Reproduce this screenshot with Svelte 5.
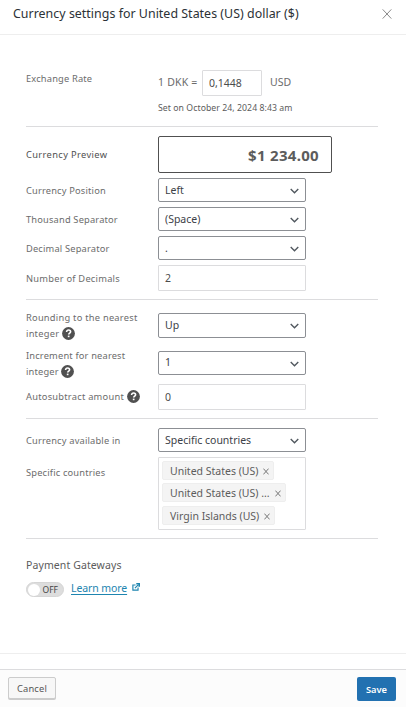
<script>
	let position = $state('Left');
	let thousand = $state('(Space)');
	let decimal = $state('.');
	let rounding = $state('Up');
	let increment = $state('1');
	let availability = $state('Specific countries');
	let enabled = $state(false);

	let countries = $state(['United States (US)', 'United States (US) ...', 'Virgin Islands (US)']);

	function removeCountry(index) {
		countries.splice(index, 1);
	}
</script>

{#snippet chevron()}
	<svg class="chevron" viewBox="0 0 10 6" aria-hidden="true">
		<path d="M.8 .8 5 4.9 9.2 .8" />
	</svg>
{/snippet}

{#snippet help()}
	<svg class="help" viewBox="0 0 13 13" aria-hidden="true">
		<circle cx="6.5" cy="6.5" r="6.4" fill="#505050" />
		<path d="M4.6 5C4.6 3.7 5.4 3 6.6 3s2 .7 2 1.7c0 1.4-1.9 1.4-1.9 2.9" fill="none" stroke="#fff" stroke-width="1.6" />
		<rect x="5.8" y="8.6" width="1.7" height="1.6" fill="#fff" />
	</svg>
{/snippet}

<div class="dialog">
	<header>
		<h1>Currency settings for United States (US) dollar ($)</h1>
		<button class="close" aria-label="Close">
			<svg viewBox="0 0 10 10"><path d="M.7.4 9.3 9.6M9.3.4.7 9.6" /></svg>
		</button>
	</header>

	<main>
		<section class="exchange">
			<div class="row">
				<span class="label">Exchange Rate</span>
				<div>
					<div class="rate">
						<span class="base">1 DKK =</span>
						<input class="rate-input" value="0,1448" aria-label="Exchange rate" />
						<span class="code">USD</span>
					</div>
					<p class="updated">Set on October 24, 2024 8:43 am</p>
				</div>
			</div>
		</section>

		<section class="format">
			<div class="row">
				<span class="label strong">Currency Preview</span>
				<div class="preview"><span>$1 234.00</span></div>
			</div>
			<div class="row">
				<label class="label" for="position">Currency Position</label>
				<div class="select">
					<select id="position" bind:value={position}>
						<option>Left</option>
						<option>Right</option>
					</select>
					{@render chevron()}
				</div>
			</div>
			<div class="row">
				<label class="label" for="thousand">Thousand Separator</label>
				<div class="select">
					<select id="thousand" bind:value={thousand}>
						<option>(Space)</option>
						<option>.</option>
					</select>
					{@render chevron()}
				</div>
			</div>
			<div class="row">
				<label class="label" for="decimal">Decimal Separator</label>
				<div class="select">
					<select id="decimal" bind:value={decimal}>
						<option>.</option>
						<option>,</option>
					</select>
					{@render chevron()}
				</div>
			</div>
			<div class="row">
				<label class="label spaced" for="decimals">Number of Decimals</label>
				<input id="decimals" value="2" />
			</div>
		</section>

		<section class="rounding">
			<div class="row two-line">
				<label class="label spaced" for="rounding">Rounding to the nearest<br />integer {@render help()}</label>
				<div class="select tall">
					<select id="rounding" bind:value={rounding}>
						<option>Up</option>
						<option>Down</option>
					</select>
					{@render chevron()}
				</div>
			</div>
			<div class="row two-line">
				<label class="label" for="increment">Increment for nearest<br />integer {@render help()}</label>
				<div class="select raised">
					<select id="increment" bind:value={increment}>
						<option>1</option>
						<option>10</option>
					</select>
					{@render chevron()}
				</div>
			</div>
			<div class="row">
				<label class="label spaced" for="autosubtract">Autosubtract amount {@render help()}</label>
				<input id="autosubtract" value="0" />
			</div>
		</section>

		<section class="availability">
			<div class="row">
				<label class="label" for="availability">Currency available in</label>
				<div class="select">
					<select id="availability" bind:value={availability}>
						<option>Specific countries</option>
						<option>All countries</option>
					</select>
					{@render chevron()}
				</div>
			</div>
			<div class="row top">
				<span class="label">Specific countries</span>
				<ul class="tags">
					{#each countries as country, i}
						<li>
							<span>{country}</span>
							<button aria-label="Remove {country}" onclick={() => removeCountry(i)}>
								<svg viewBox="0 0 6 7"><path d="M.4.6 5.6 6.4M5.6.6.4 6.4" /></svg>
							</button>
						</li>
					{/each}
				</ul>
			</div>
		</section>

		<section class="gateways">
			<h2>Payment Gateways</h2>
			<div class="gateway">
				<button class="toggle" class:on={enabled} onclick={() => (enabled = !enabled)}>
					<i></i><span>{enabled ? 'ON' : 'OFF'}</span>
				</button>
				<a href="#learn">Learn more</a>
				<svg class="external" viewBox="0 0 9 9" aria-hidden="true">
					<path d="M4 2.2H1v5.9h5.8V5M3.3 5.7 7.2 1.8" />
					<path d="M4.8.9h3.3v3.3" stroke-width="1.8" />
				</svg>
			</div>
		</section>
	</main>

	<footer>
		<button class="cancel">Cancel</button>
		<button class="save">Save</button>
	</footer>
</div>

<style>
	:global(body) {
		background: #fff;
	}

	.dialog {
		display: flex;
		flex-direction: column;
		width: 406px;
		height: 707px;
		overflow: hidden;
		box-sizing: border-box;
		font-family: 'Noto Sans', 'Open Sans', sans-serif;
		font-size: 10.5px;
		color: #5c5c5c;
	}

	.dialog * {
		box-sizing: border-box;
	}

	button {
		font: inherit;
		padding: 0;
		border: 0;
		background: none;
		cursor: pointer;
	}

	header {
		display: flex;
		flex: none;
		justify-content: space-between;
		height: 35px;
		padding: 0 14px 0 13px;
		border-bottom: 1px solid #eee;
	}

	h1 {
		margin: 0;
		font-size: 12.4px;
		font-weight: 400;
		line-height: 27px;
		letter-spacing: 0.03px;
		white-space: nowrap;
		color: #2c3136;
	}

	.close {
		width: 10px;
		height: 27px;
	}

	.close svg {
		display: block;
		width: 10px;
		height: 10px;
		fill: none;
		stroke: #8a8a8a;
	}

	main {
		flex: none;
		height: 619px;
		padding: 35px 28px 0 26px;
		border-bottom: 1px solid #eee;
	}

	section {
		display: flex;
		flex-direction: column;
		gap: 5px;
		border-bottom: 1px solid #dcdcde;
	}

	.row {
		display: grid;
		grid-template-columns: 132px 1fr;
		align-items: center;
	}

	.row.top {
		align-items: start;
	}

	.label {
		padding-top: 1px;
		font-size: 9.3px;
		line-height: 16px;
		letter-spacing: 0.17px;
		white-space: nowrap;
		color: #6c6c6c;
	}

	.spaced {
		letter-spacing: 0.24px;
	}

	.strong {
		padding-top: 0;
		letter-spacing: 0.37px;
		color: #505050;
	}

	input,
	select {
		display: block;
		width: 148px;
		height: 26px;
		margin: 0;
		padding: 0 6px;
		border: 1px solid #dcdcde;
		border-radius: 1px;
		background: #fff;
		font: inherit;
		color: #4c4c4c;
		outline: none;
	}

	select {
		height: 24px;
		padding: 0 20px 1px 6px;
		border-color: #8c8f94;
		border-radius: 2px;
		appearance: none;
		color: #3c4147;
	}

	.select {
		position: relative;
		width: 148px;
	}

	.tall select {
		height: 25px;
	}

	.raised {
		margin-bottom: 2px;
	}

	.chevron {
		position: absolute;
		top: 10px;
		right: 7px;
		width: 9px;
		height: 6px;
		fill: none;
		stroke: #50575e;
		stroke-width: 1.5;
		pointer-events: none;
	}

	.exchange {
		height: 57px;
	}

	.exchange .row {
		align-items: start;
	}

	.exchange .label {
		padding-top: 0;
		line-height: 18px;
	}

	.rate {
		display: flex;
		align-items: center;
		color: #6c6c6c;
	}

	.base {
		width: 44px;
		letter-spacing: 0.2px;
		white-space: nowrap;
	}

	.base,
	.code {
		padding-bottom: 2px;
	}

	.rate-input {
		width: 60px;
		padding: 0 6px;
	}

	.code {
		margin-left: 8px;
	}

	.updated {
		margin: 4px 0 0;
		font-size: 8.7px;
		line-height: 16px;
		letter-spacing: 0.06px;
		white-space: nowrap;
	}

	.format {
		height: 173px;
		padding-top: 9px;
	}

	.preview {
		display: flex;
		align-items: center;
		justify-content: flex-end;
		width: 174px;
		height: 37px;
		padding: 1px 12px 0 0;
		border: 1px solid #505050;
		border-radius: 2px;
		font-size: 15px;
		font-weight: 700;
		letter-spacing: 0.3px;
		color: #5c5c5c;
	}

	.rounding {
		height: 119px;
		padding-top: 9px;
		gap: 6px;
	}

	.two-line {
		height: 32px;
	}

	.rounding .row:last-child {
		margin-top: -1px;
	}

	.rounding .row:last-child .label {
		padding: 0;
	}

	.help {
		width: 13px;
		height: 13px;
		vertical-align: -3px;
	}

	.availability {
		height: 120px;
		padding-top: 9px;
	}

	.top .label {
		line-height: 30px;
	}

	.tags {
		display: flex;
		flex-direction: column;
		align-items: flex-start;
		gap: 3px;
		width: 148px;
		height: 73px;
		margin: 0;
		padding: 3px;
		border: 1px solid #dcdcde;
		border-radius: 1px;
		list-style: none;
	}

	.tags li {
		display: flex;
		align-items: center;
		height: 19px;
		padding: 1px 4px 0 7px;
		border: 1px solid #eee;
		border-radius: 2px;
		background: #f4f4f4;
		line-height: 17px;
		white-space: nowrap;
	}

	.tags li:last-child {
		margin-top: 1px;
	}

	.tags button {
		display: flex;
		margin: 0 0 0 5px;
	}

	.tags svg {
		width: 6px;
		height: 7px;
		fill: none;
		stroke: #777;
	}

	.gateways {
		gap: 0;
		border: 0;
		padding-top: 18px;
	}

	h2 {
		margin: 0;
		font-size: 10.5px;
		font-weight: 400;
		line-height: 16px;
		letter-spacing: 0.1px;
	}

	.gateway {
		display: flex;
		align-items: center;
		height: 30px;
	}

	.toggle {
		display: flex;
		align-items: center;
		width: 38px;
		height: 15px;
		margin-top: 3px;
		padding: 0 5px 0 1px;
		justify-content: space-between;
		border: 1px solid #d5d5d5;
		border-radius: 8px;
		background: #ddd;
		font-size: 8.5px;
		line-height: 13px;
		color: #444;
	}

	.toggle i {
		width: 12px;
		height: 12px;
		border-radius: 50%;
		background: #fff;
	}

	.toggle.on {
		flex-direction: row-reverse;
	}

	a {
		margin-left: 7px;
		letter-spacing: -0.1px;
		color: #1e85b0;
		text-underline-offset: 2px;
	}

	.external {
		width: 8px;
		height: 8px;
		margin: -3px 0 0 5px;
		fill: none;
		stroke: #1e85b0;
		stroke-width: 1.3;
	}

	footer {
		display: flex;
		flex: 1;
		align-items: flex-start;
		justify-content: space-between;
		margin-top: 15px;
		padding: 7px 10px 0 8px;
		border-top: 1px solid #dcdcde;
		background: #fcfcfc;
	}

	footer button {
		border-radius: 2px;
		font-size: 9.3px;
	}

	.cancel {
		width: 48px;
		height: 22px;
		border: 1px solid #ccc;
		background: #f7f7f7;
		box-shadow: 0 1px 0 #ccc;
		letter-spacing: 0.2px;
		color: #555;
	}

	.save {
		width: 39px;
		height: 24px;
		background: #2271b1;
		font-weight: 600;
		color: #fff;
	}
</style>
